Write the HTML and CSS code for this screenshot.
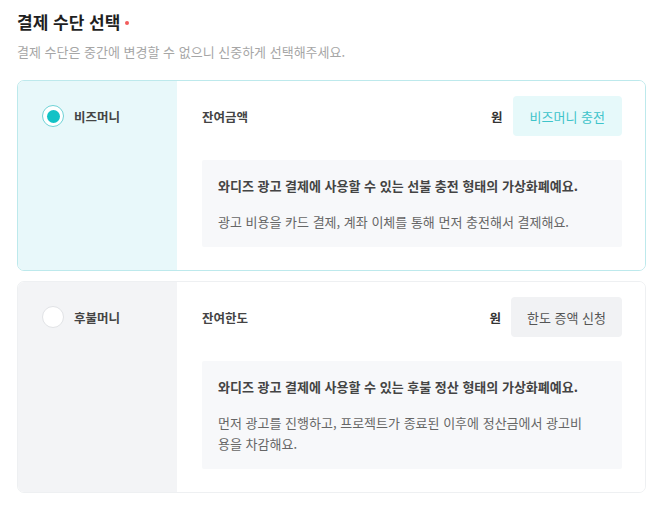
FILE: index.html
```html
<!DOCTYPE html>
<html lang="ko">
<head>
<meta charset="utf-8">
<link rel="stylesheet" href="styles.css">
</head>
<body>
<div class="page">
  <h2 class="title">결제 수단 선택<span class="req"></span></h2>
  <p class="sub">결제 수단은 중간에 변경할 수 없으니 신중하게 선택해주세요.</p>

  <div class="card card-on">
    <div class="side">
      <div class="row">
        <span class="radio radio-on"></span>
        <span class="opt">비즈머니</span>
      </div>
    </div>
    <div class="main">
      <div class="head">
        <span class="lbl">잔여금액</span>
        <div class="amt">
          <span class="won">원</span>
          <span class="btn btn-on">비즈머니 충전</span>
        </div>
      </div>
      <div class="info">
        <p class="info-b">와디즈 광고 결제에 사용할 수 있는 선불 충전 형태의 가상화폐예요.</p>
        <p class="info-t">광고 비용을 카드 결제, 계좌 이체를 통해 먼저 충전해서 결제해요.</p>
      </div>
    </div>
  </div>

  <div class="card card-off">
    <div class="side">
      <div class="row">
        <span class="radio"></span>
        <span class="opt">후불머니</span>
      </div>
    </div>
    <div class="main">
      <div class="head">
        <span class="lbl">잔여한도</span>
        <div class="amt">
          <span class="won">원</span>
          <span class="btn">한도 증액 신청</span>
        </div>
      </div>
      <div class="info">
        <p class="info-b">와디즈 광고 결제에 사용할 수 있는 후불 정산 형태의 가상화폐예요.</p>
        <p class="info-t">먼저 광고를 진행하고, 프로젝트가 종료된 이후에 정산금에서 광고비용을 차감해요.</p>
      </div>
    </div>
  </div>
</div>
</body>
</html>
```
FILE: styles.css
```css
* { box-sizing: border-box; }
html, body { margin: 0; padding: 0; background: #fff; }
body {
  font-family: "Noto Sans CJK KR", "Noto Sans", sans-serif;
  color: #333;
}
.page {
  padding: 10px 19px 0 17px;
}
.title {
  margin: 0;
  font-size: 17px;
  line-height: 24px;
  font-weight: 700;
  color: #1f1f1f;
  display: flex;
  align-items: center;
}
.req {
  display: inline-block;
  width: 4px;
  height: 4px;
  border-radius: 50%;
  background: #f25c5c;
  margin-left: 5px;
  margin-top: 1px;
}
.sub {
  margin: 9px 0 19px;
  font-size: 13px;
  line-height: 18px;
  color: #a6a6a6;
}
.card {
  display: flex;
  border: 1px solid #eef0f2;
  border-radius: 7px;
  overflow: hidden;
  width: 629px;
  margin-bottom: 10px;
}
.card-on { border-color: #bde9ec; }
.side {
  width: 159px;
  flex: none;
  padding: 15px 0 0 24px;
  background: #f3f4f6;
}
.card-on .side { background: #e8f8fa; }
.row {
  display: flex;
  align-items: center;
  height: 40px;
  gap: 10px;
}
.radio {
  width: 22px;
  height: 22px;
  border-radius: 50%;
  border: 1px solid #e1e3e6;
  background: #fff;
  flex: none;
  display: flex;
  align-items: center;
  justify-content: center;
}
.radio-on { border: 1.5px solid #6fd3d6; }
.radio-on::after {
  content: "";
  width: 13px;
  height: 13px;
  border-radius: 50%;
  background: #12c2c6;
}
.opt {
  font-size: 12.5px;
  font-weight: 700;
  color: #444;
}
.main {
  flex: 1;
  padding: 15px 23px 23px 25px;
  background: #fff;
}
.head {
  display: flex;
  align-items: center;
  justify-content: space-between;
  height: 40px;
}
.lbl {
  font-size: 12.5px;
  font-weight: 700;
  color: #444;
}
.amt {
  display: flex;
  align-items: center;
  gap: 10px;
}
.won {
  font-size: 12.5px;
  font-weight: 700;
  color: #333;
}
.btn {
  display: flex;
  align-items: center;
  height: 40px;
  padding: 0 16px;
  border-radius: 4px;
  background: #f1f2f4;
  color: #555;
  font-size: 13px;
}
.btn-on {
  padding: 0 17px;
  background: #e6f9fa;
  color: #3ec4ca;
}
.info {
  margin-top: 24px;
  background: #f7f8fa;
  border-radius: 2px;
  padding: 15px 32px 15px 16px;
}
.info p {
  margin: 0;
  font-size: 13px;
  line-height: 21px;
  word-break: break-all;
}
.info-b {
  font-weight: 700;
  color: #444;
}
.info-t {
  margin-top: 15px !important;
  color: #666;
}
```
